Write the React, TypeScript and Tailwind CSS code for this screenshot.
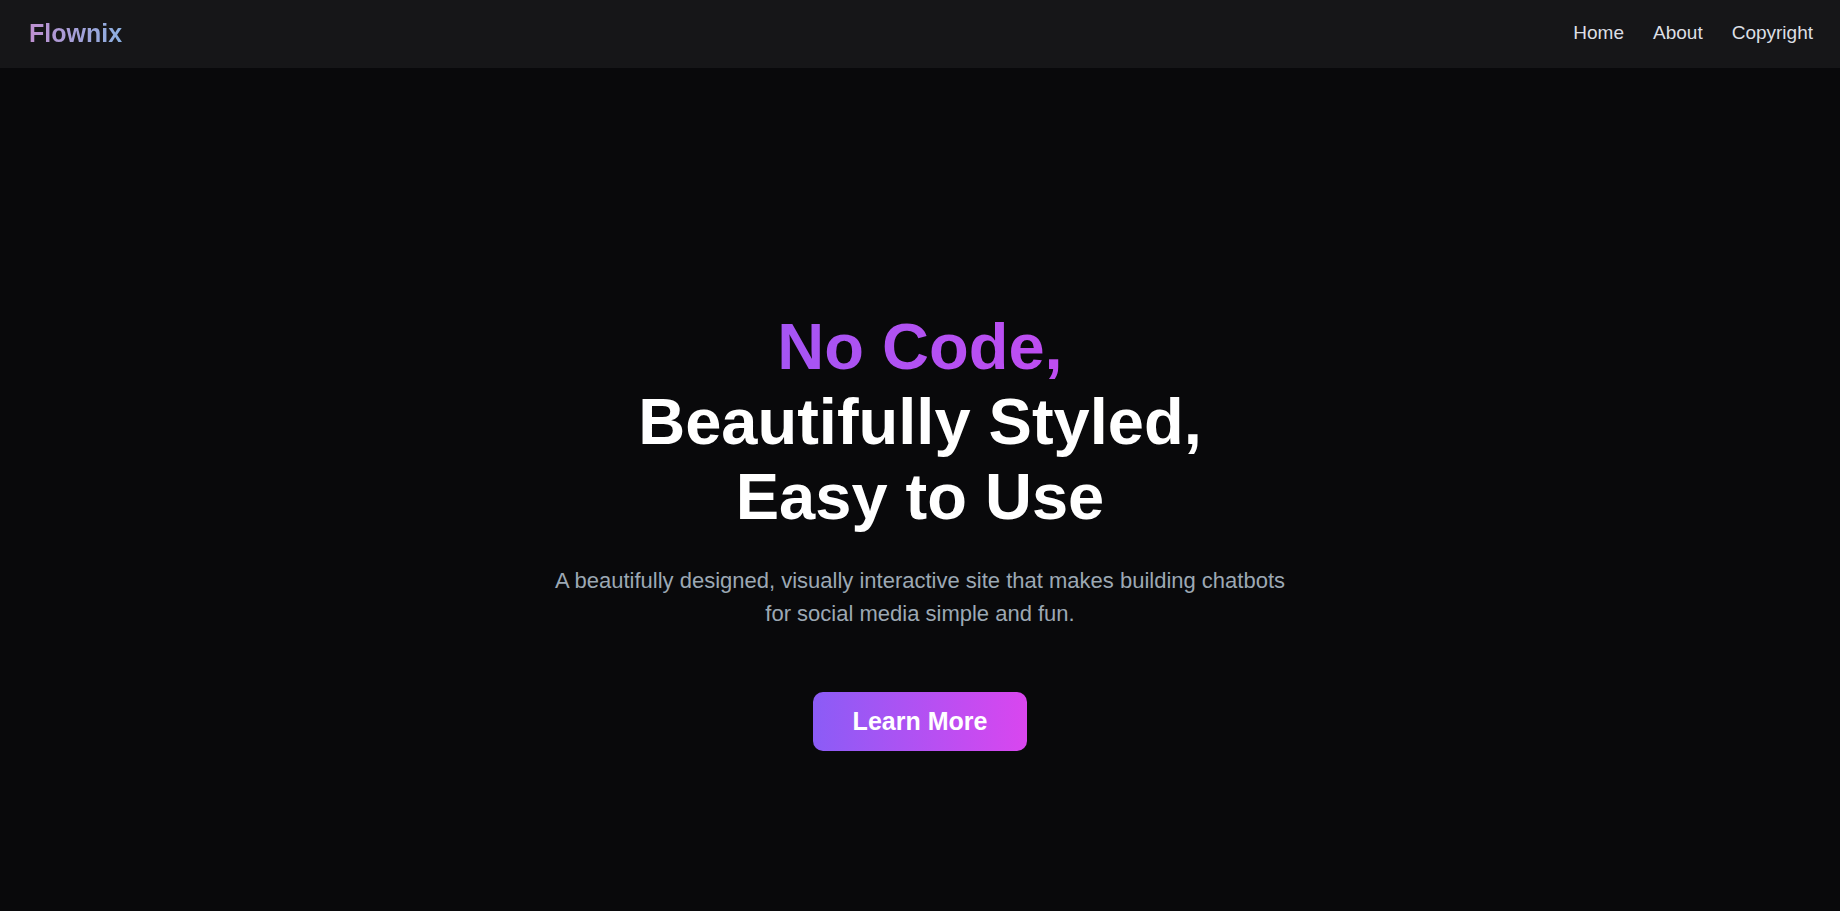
export default function App() {
  return (
    <div className="flex min-h-screen flex-col bg-[#09090b] font-['Liberation_Sans',Arial,sans-serif] text-white">
      <header className="flex items-center justify-between bg-[#161618] px-[27px] pt-[15px] pb-[17px]">
        <a href="#home" className="bg-linear-to-r/srgb from-[#c08fd0] to-[#8bb0e0] bg-clip-text pl-0.5 text-[25px] leading-9 font-bold text-transparent">
          Flownix
        </a>
        <nav className="flex gap-[29px] text-[19px] leading-7 text-[#dcdfe4]">
          <a href="#home">Home</a>
          <a href="#about">About</a>
          <a href="#copyright">Copyright</a>
        </nav>
      </header>
      <main className="flex flex-1 flex-col items-center justify-center pt-20 text-center">
        <h1 className="w-full max-w-[850px] text-[65px] leading-[75px] font-bold">
          <span className="block bg-linear-to-r/srgb from-[#8b5cf6] to-[#d946ef] bg-clip-text text-transparent">No Code,</span>
          Beautifully Styled,
          <br />
          Easy to Use
        </h1>
        <p className="mt-[30px] max-w-[750px] text-[22px] leading-[33px] text-[#9ca8b4]">
          A beautifully designed, visually interactive site that makes building chatbots for social media simple and fun.
        </p>
        <a href="#about" className="mt-[62px] rounded-[10px] bg-linear-to-r/srgb from-[#8b5cf6] to-[#d946ef] px-10 py-3 text-[25px] leading-[35px] font-bold">
          Learn More
        </a>
      </main>
    </div>
  );
}
